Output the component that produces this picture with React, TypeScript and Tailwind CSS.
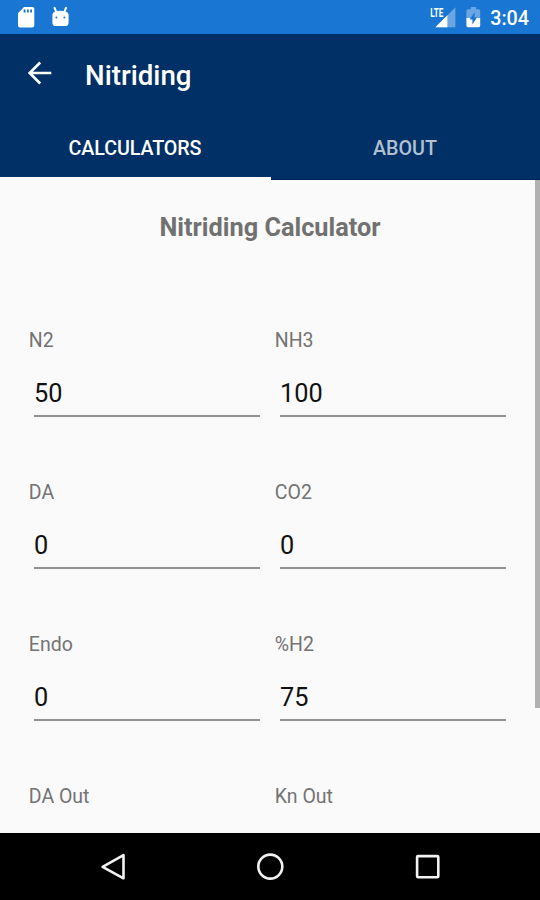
import React from 'react';

const rows: { label: string; value: string }[][] = [
  [{ label: 'N2', value: '50' }, { label: 'NH3', value: '100' }],
  [{ label: 'DA', value: '0' }, { label: 'CO2', value: '0' }],
  [{ label: 'Endo', value: '0' }, { label: '%H2', value: '75' }],
  [{ label: 'DA Out', value: '' }, { label: 'Kn Out', value: '' }],
];

function StatusBar() {
  return (
    <div className="flex h-[34px] shrink-0 items-center bg-[#1976d2] pl-[18px] pr-[11px] text-white">
      <svg width="17" height="21" viewBox="0 0 17 21" className="mt-px">
        <path fillRule="evenodd" fill="#fff" d="M6 0H14.5Q16.3 0 16.3 1.8V18.6Q16.3 20.4 14.5 20.4H1.8Q0 20.4 0 18.6V6.2ZM5.6 2.6V5.6H7.6V2.6ZM9 2.6V5.6H10.8V2.6ZM12.2 2.6V5.6H14V2.6Z" />
      </svg>
      <svg width="17" height="20" viewBox="0 0 17 20" className="ml-[17px] -mt-px">
        <path d="M2.6 .8L4.4 5.4M14 .8L12.2 5.4" stroke="#fff" strokeWidth="2" strokeLinecap="round" />
        <path fillRule="evenodd" fill="#fff" d="M3.2 4.6Q8.3 2.8 13.4 4.6Q16.6 5.4 16.6 8V15.4Q16.6 19 13 19H3.8Q.4 19 .4 15.4V8Q.4 5.4 3.2 4.6ZM4.4 9.6A1 1 0 1 0 4.4 11.6A1 1 0 1 0 4.4 9.6ZM12.4 9.6A1 1 0 1 0 12.4 11.6A1 1 0 1 0 12.4 9.6Z" />
      </svg>
      <svg width="26" height="22" viewBox="0 0 26 22" className="ml-auto">
        <path d="M25.4 1.2V21.2H5.4Z" fill="#6ba6e2" />
        <path d="M17.4 9.2V21.2H5.4Z" fill="#fff" />
        <path d="M0 0H14V11.4H0Z" fill="#1976d2" />
        <text x="0.3" y="10.8" fill="#fff" fontFamily="Roboto, sans-serif" fontWeight="700" fontSize="13" textLength="13" lengthAdjust="spacingAndGlyphs">LTE</text>
      </svg>
      <svg width="15" height="21" viewBox="0 0 15 21" className="ml-[10px]">
        <path d="M4.8 0H10V2.2H12.6Q14.2 2.2 14.2 3.8V11.2H.4V3.8Q.4 2.2 2 2.2H4.8Z" fill="#6ba6e2" />
        <path d="M.4 11H14.2V18.6Q14.2 20.2 12.6 20.2H2Q.4 20.2 .4 18.6Z" fill="#fff" />
        <path d="M8.6 5.2L3.6 12.6H6.4V17.6L11 10.4H8.6Z" fill="#1976d2" />
      </svg>
      <span className="ml-[9px] mt-[3px] text-[19.7px] leading-6 font-medium">3:04</span>
    </div>
  );
}

function Field({ label, value }: { label: string; value: string }) {
  return (
    <div className="h-[152px] w-[246px]">
      <div className="ml-[0.8px] h-[23px] pt-px text-[19.5px] leading-[23px] text-[#737373]">{label}</div>
      <div className="ml-[6px] mt-[23px] h-[43px] w-[226px] border-b-2 border-[#929292] text-[25.3px] leading-[39px] text-[#111111]">{value}</div>
    </div>
  );
}

export default function App() {
  return (
    <div className="flex h-[900px] w-[540px] flex-col overflow-hidden bg-[#fafafa] font-[Roboto,sans-serif]">
      <StatusBar />
      <header className="h-[146px] shrink-0 border-b border-[#002058] bg-[#003066] text-white">
        <div className="flex h-[79px] items-center pl-[28px]">
          <svg width="24" height="24" viewBox="0 0 24 24" fill="none" stroke="#fff" strokeWidth="2.6" className="-mt-px">
            <path d="M23.3 12H2M12.2 1.5L1.7 12L12.2 22.5" />
          </svg>
          <h1 className="ml-[33px] mt-[4px] text-[27.7px] font-medium leading-8">Nitriding</h1>
        </div>
        <div className="flex h-[67px] text-center text-[19.7px] font-medium leading-[71px]">
          <div className="h-[67px] w-[271px] border-b-3 border-[#fafafa] pr-px tracking-[-0.1px]">CALCULATORS</div>
          <div className="w-[269px] pr-px text-[#b2c0d2]">ABOUT</div>
        </div>
      </header>
      <main className="flex h-[653px] shrink-0 overflow-hidden">
        <div className="w-[535px] pl-[28px]">
          <h2 className="mt-[33px] h-[30px] w-[484px] text-center text-[25.3px] font-bold leading-[30px] text-[#717171]">Nitriding Calculator</h2>
          <div className="mt-[85px]">
            {rows.map((row, i) => (
              <div key={i} className="flex">
                {row.map((f) => (
                  <Field key={f.label} label={f.label} value={f.value} />
                ))}
              </div>
            ))}
          </div>
        </div>
        <div className="h-[528px] w-[5px] bg-[#b1b1b1]" />
      </main>
      <nav className="flex h-[67px] shrink-0 items-center bg-black">
        <svg width="540" height="67" viewBox="0 0 540 67" fill="none" stroke="#f2f2f2" strokeWidth="2.6" strokeLinejoin="round">
          <path d="M123.5 22.2V45.3L102.6 33.8Z" />
          <circle cx="270.3" cy="33.6" r="12" />
          <rect x="417.1" y="23.1" width="21.2" height="21.2" rx="1" />
        </svg>
      </nav>
    </div>
  );
}
